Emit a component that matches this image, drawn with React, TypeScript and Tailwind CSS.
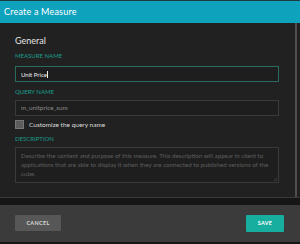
export default function App() {
  return (
    <div
      className="flex h-[244px] w-[300px] flex-col bg-[#161616] text-[#ddd]"
      style={{ fontFamily: 'Lato, "Open Sans", sans-serif' }}
    >
      <div className="h-[1px] bg-[#1c3a40]" />
      <div className="flex h-[22px] items-center bg-[#0ea2bd] px-[4px] text-[9px] tracking-[0.2px] text-white">
        Create a Measure
      </div>

      <div className="relative flex h-[174px] bg-[#212121]">
        <div className="flex w-[279px] flex-col pl-[15px] pt-[12px]">
          <div className="h-[12px] text-[9px] leading-[12px] text-[#e4e4e4]">General</div>

          <Label className="mt-[5px]">Measure name</Label>
          <div className="mt-[6px] flex h-[16px] items-center border border-[#2b6b5e] bg-[#1e1e1e] px-[5px] text-[6px] text-[#eee]">
            Unit Price<span className="ml-[0.5px] inline-block h-[7px] w-[0.5px] bg-[#eee]" />
          </div>

          <Label className="mt-[6px]">Query name</Label>
          <div className="mt-[4px] flex h-[16px] items-center border border-[#3a3a3a] bg-[#1e1e1e] px-[5px] text-[6.3px] text-[#8a8a8a]">
            m_unitprice_sum
          </div>

          <div className="mt-[4px] flex h-[9px] items-center gap-[5px]">
            <div className="h-[9px] w-[9px] border border-[#777] bg-[#5c5c5c]" />
            <span className="text-[6.5px] text-[#ddd]">Customize the query name</span>
          </div>

          <Label className="mt-[6px]">Description</Label>
          <div className="relative mt-[4px] h-[36px] whitespace-nowrap border border-[#3a3a3a] bg-[#1e1e1e] px-[5px] pt-[3px] text-[6.2px] leading-[9px] text-[#5e5e5e]">
            Describe the content and purpose of this measure. This description will appear in client to
            <br />
            applications that are able to display it when they are connected to published versions of the
            <br />
            cube.
            <svg viewBox="0 0 6 6" className="absolute bottom-[1px] right-[1px] h-[4px] w-[4px]" stroke="#666" strokeWidth="0.8">
              <path d="M6 1L1 6M6 4L4 6" />
            </svg>
          </div>
        </div>
        <div className="absolute right-[3px] top-0 h-full w-[2px] bg-[#4e4e4e]" />
      </div>

      <div className="h-[1px] bg-[#3a3a3a]" />
      <div className="h-[7px] bg-[#161616]" />

      <div className="flex h-[37px] items-start justify-between bg-[#3b3b3b] pl-[15px] pr-[16px] pt-[10px]">
        <button className="flex h-[16px] w-[46px] items-center justify-center rounded-[1px] bg-[#575757] text-[5.5px] font-bold tracking-[0.3px] text-[#d8d8d8]">
          CANCEL
        </button>
        <button className="flex h-[17px] w-[38px] items-center justify-center rounded-[1px] bg-[#17ae9f] text-[5.5px] font-bold tracking-[0.3px] text-white">
          SAVE
        </button>
      </div>
      <div className="flex-1 bg-[#161616]" />
    </div>
  );
}

function Label({ children, className = '' }: { children: React.ReactNode; className?: string }) {
  return (
    <div className={`h-[8px] text-[6px] uppercase leading-[8px] text-[#1a9e8c] ${className}`}>{children}</div>
  );
}
